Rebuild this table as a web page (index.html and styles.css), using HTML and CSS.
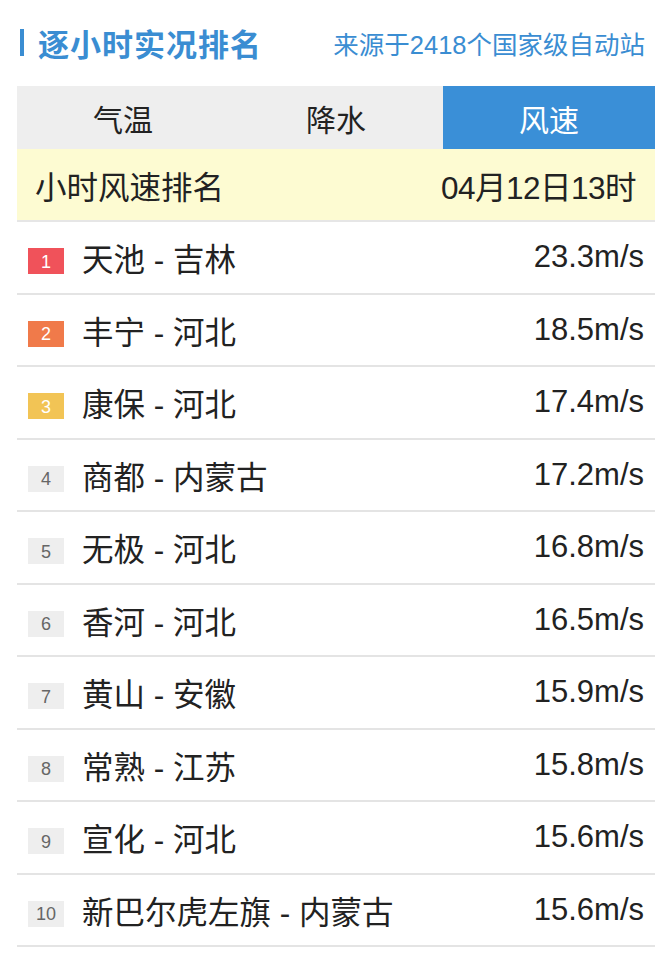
FILE: index.html
```html
<!DOCTYPE html>
<html lang="zh">
<head>
<meta charset="utf-8">
<link rel="stylesheet" href="styles.css">
</head>
<body>
<div class="page">
  <div class="title-row">
    <div class="title"><span class="bar"></span>逐小时实况排名</div>
    <div class="source">来源于2418个国家级自动站</div>
  </div>
  <div class="tabs">
    <div class="tab">气温</div>
    <div class="tab">降水</div>
    <div class="tab active">风速</div>
  </div>
  <div class="head">
    <span>小时风速排名</span>
    <span class="time">04月12日13时</span>
  </div>
  <ul class="list">
    <li class="row"><span class="badge r1">1</span><span class="name">天池 - 吉林</span><span class="val">23.3m/s</span></li>
    <li class="row"><span class="badge r2">2</span><span class="name">丰宁 - 河北</span><span class="val">18.5m/s</span></li>
    <li class="row"><span class="badge r3">3</span><span class="name">康保 - 河北</span><span class="val">17.4m/s</span></li>
    <li class="row"><span class="badge">4</span><span class="name">商都 - 内蒙古</span><span class="val">17.2m/s</span></li>
    <li class="row"><span class="badge">5</span><span class="name">无极 - 河北</span><span class="val">16.8m/s</span></li>
    <li class="row"><span class="badge">6</span><span class="name">香河 - 河北</span><span class="val">16.5m/s</span></li>
    <li class="row"><span class="badge">7</span><span class="name">黄山 - 安徽</span><span class="val">15.9m/s</span></li>
    <li class="row"><span class="badge">8</span><span class="name">常熟 - 江苏</span><span class="val">15.8m/s</span></li>
    <li class="row"><span class="badge">9</span><span class="name">宣化 - 河北</span><span class="val">15.6m/s</span></li>
    <li class="row"><span class="badge">10</span><span class="name">新巴尔虎左旗 - 内蒙古</span><span class="val">15.6m/s</span></li>
  </ul>
</div>
</body>
</html>
```
FILE: styles.css
```css
html, body {
  margin: 0;
  padding: 0;
  background: #ffffff;
}
body {
  font-family: "Liberation Sans", "Noto Sans CJK SC", sans-serif;
  color: #222222;
}
.page {
  width: 638px;
  margin-left: 17px;
}
.title-row {
  height: 86px;
  display: flex;
  align-items: center;
  justify-content: space-between;
  padding-bottom: 2px;
  box-sizing: border-box;
}
.title {
  display: flex;
  align-items: center;
  font-size: 31px;
  font-weight: bold;
  color: #3a8dd2;
  letter-spacing: 1px;
}
.bar {
  display: inline-block;
  width: 4px;
  height: 27px;
  background: #3a8dd2;
  margin-left: 3px;
  margin-right: 14px;
}
.source {
  font-size: 25.5px;
  color: #3a8dd2;
  margin-right: 10px;
}
.tabs {
  display: grid;
  grid-template-columns: 212px 214px 212px;
  height: 63px;
  background: #eeeeee;
}
.tab {
  display: flex;
  align-items: center;
  justify-content: center;
  font-size: 30px;
  color: #222222;
}
.tab.active {
  background: #3a8fd7;
  color: #ffffff;
}
.head {
  height: 71px;
  background: #fdfbd2;
  display: flex;
  align-items: center;
  justify-content: space-between;
  padding: 0 19px 0 18px;
  font-size: 31.5px;
  color: #222222;
  border-bottom: 2px solid #e6e6e6;
}
.time {
  letter-spacing: -0.5px;
}
.list {
  list-style: none;
  margin: 0;
  padding: 0;
}
.row {
  height: 70.5px;
  display: flex;
  align-items: center;
  border-bottom: 2px solid #e4e4e4;
}
.badge {
  width: 36px;
  height: 26px;
  margin: 8px 18px 0 11px;
  background: #eeeeee;
  color: #666666;
  font-size: 18px;
  display: flex;
  align-items: center;
  justify-content: center;
  padding-top: 2px;
  box-sizing: border-box;
}
.badge.r1 { background: #f0525a; color: #ffffff; }
.badge.r2 { background: #f07a4a; color: #ffffff; }
.badge.r3 { background: #f2c455; color: #ffffff; }
.name {
  font-size: 31.5px;
  flex: 1;
  color: #222222;
}
.val {
  font-size: 31px;
  margin-right: 11px;
  color: #222222;
}
```
